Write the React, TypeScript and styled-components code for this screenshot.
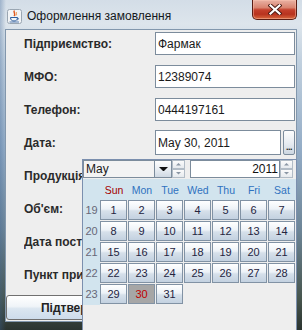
import React, { FC } from 'react'
import styled, { createGlobalStyle } from 'styled-components'

const GlobalStyle = createGlobalStyle`
    html, body { margin: 0; padding: 0; }
    body {
        width: 302px;
        height: 330px;
        overflow: hidden;
        background: #2e3832;
        font-family: "Liberation Sans", Arial, sans-serif;
    }
`

const Window = styled.div`
    position: relative;
    width: 302px;
    height: 330px;
    box-sizing: border-box;
    padding: 0 5px 8px 5px;
    display: flex;
    flex-direction: column;
    overflow: hidden;
    background:
        linear-gradient(90deg, rgba(60, 100, 150, 0.35) 0, rgba(60, 100, 150, 0) 6px),
        linear-gradient(180deg, #d3dde7 0, #dde5ec 24px, #c2d1df 60px, #93acc6 150px, #6d8597 230px, #46544c 300px, #2b3430 330px);
`

const TitleBar = styled.div`
    height: 29px;
    flex-shrink: 0;
    display: flex;
    align-items: flex-start;
`

const AppIcon = styled.svg`
    margin: 9px 5px 0 2px;
    flex-shrink: 0;
`

const Title = styled.div`
    margin-top: 9px;
    font-size: 12px;
    line-height: 14px;
    color: #141820;
    white-space: nowrap;
`

const CloseButton = styled.div`
    margin-left: auto;
    width: 45px;
    height: 20px;
    box-sizing: border-box;
    border: 1px solid #5a1d14;
    border-top: none;
    border-radius: 0 0 5px 5px;
    display: flex;
    justify-content: center;
    align-items: center;
    background: linear-gradient(180deg, #e9b2a4 0, #d98470 40%, #c4402c 52%, #b8331f 75%, #d8683e 100%);
    box-shadow: inset 0 0 0 1px rgba(255, 200, 180, 0.45);
`

const Content = styled.div`
    flex: 1;
    display: flex;
    flex-direction: column;
    background: #eeeeee;
    border: 1px solid #8297ad;
`

const FormGrid = styled.div`
    display: grid;
    grid-template-columns: 131px 1fr;
    grid-auto-rows: 23px;
    row-gap: 10px;
    padding: 2px 1px 0 18px;
`

// rows under the popup are cut where the popup begins
const Label = styled.div<{ $clipped?: boolean }>`
    display: flex;
    align-items: center;
    font-size: 12px;
    font-weight: 700;
    color: #2a2a2a;
    white-space: nowrap;
    ${p => p.$clipped && 'max-width: 58px; overflow: hidden;'}
`

const Field = styled.div<{ $grow?: boolean }>`
    box-sizing: border-box;
    height: 100%;
    ${p => p.$grow && 'flex: 1;'}
    display: flex;
    align-items: center;
    padding: 0 2px;
    background: #ffffff;
    border: 1px solid #7c8c9c;
    font-size: 12px;
    color: #1a1a1a;
    white-space: nowrap;
`

const DateRow = styled.div`
    display: flex;
    gap: 2px;
    margin: -1px 0;
`

const DotsButton = styled.div`
    width: 12px;
    box-sizing: border-box;
    border: 1px solid #7c8c9c;
    border-radius: 2px;
    background: linear-gradient(180deg, #fdfdfd 0, #e8edf2 50%, #cdd7e1 100%);
    display: flex;
    justify-content: center;
    align-items: flex-end;
    overflow: hidden;
    font-size: 9px;
    line-height: 14px;
    font-weight: 700;
    color: #222;
    letter-spacing: -0.5px;
`

const ButtonRow = styled.div`
    margin-top: 9px;
    display: grid;
    grid-template-columns: 1fr 1fr;
    height: 25px;
    padding-right: 1px;
`

const ActionButton = styled.div`
    box-sizing: border-box;
    border: 1px solid #707070;
    border-radius: 3px;
    background: linear-gradient(180deg, #ffffff 0, #f0f4f8 45%, #dbe6f0 55%, #cddceb 100%);
    display: flex;
    justify-content: center;
    align-items: center;
    font-size: 12px;
    font-weight: 700;
    color: #222;
`

/* calendar popup lies over the form */
const Popup = styled.div`
    position: absolute;
    left: 82px;
    top: 159px;
    width: 215px;
    bottom: -4px;
    box-sizing: border-box;
    border: 1px solid #7b8fae;
    background: #eeeeee;
`

const TopRow = styled.div`
    display: flex;
    height: 18px;
    margin-bottom: 1px;
`

const MonthBox = styled.div`
    width: 71px;
    box-sizing: border-box;
    border: 1px solid #7c8c9c;
    border-right: none;
    background: #f3f3f3;
    padding-left: 2px;
    display: flex;
    align-items: center;
    font-size: 12px;
    color: #1a1a1a;
`

const ArrowButton = styled.div`
    width: 18px;
    box-sizing: border-box;
    border: 1px solid #7c8c9c;
    background: linear-gradient(180deg, #fdfdfd 0, #e9eef3 50%, #d0d9e3 100%);
    display: flex;
    justify-content: center;
    align-items: center;
`

const Spin = styled.div`
    width: 13px;
    display: flex;
    flex-direction: column;
`

const SpinHalf = styled.div`
    flex: 1;
    box-sizing: border-box;
    border: 1px solid #b2bcc6;
    background: linear-gradient(180deg, #fbfbfb 0, #e6eaee 100%);
    display: flex;
    justify-content: center;
    align-items: center;
`

const YearBox = styled.div`
    width: 90px;
    margin-left: 5px;
    box-sizing: border-box;
    border: 1px solid #7c8c9c;
    background: #ffffff;
    padding-right: 1px;
    display: flex;
    align-items: center;
    justify-content: flex-end;
    font-size: 12px;
    color: #111;
`

const CalendarGrid = styled.div`
    display: grid;
    grid-template-columns: 17px repeat(7, 28px);
    grid-auto-rows: 21px;
`

const HeadCell = styled.div<{ $sunday?: boolean }>`
    background: #d2e4ee;
    display: flex;
    justify-content: center;
    align-items: center;
    font-size: 10.5px;
    color: ${p => (p.$sunday ? '#a40000' : '#2f72c0')};
`

const WeekCell = styled.div`
    background: #d2e4ee;
    display: flex;
    justify-content: center;
    align-items: center;
    padding-bottom: 1px;
    font-size: 11px;
    color: #686878;
`

const DayButton = styled.div<{ $selected?: boolean }>`
    width: 27px;
    height: 20px;
    box-sizing: border-box;
    border: 1px solid #8192a4;
    background: ${p => (p.$selected
        ? '#a6a6a6'
        : 'linear-gradient(180deg, #ffffff 0, #edf2f7 45%, #d6e0ea 55%, #c3d1e0 100%)')};
    display: flex;
    justify-content: center;
    align-items: center;
    font-size: 11px;
    color: ${p => (p.$selected ? '#c00000' : '#24243f')};
`

const Triangle: FC<{ size: number; up?: boolean; color: string }> = ({ size, up, color }) => (
    <svg width={size} height={size / 2} viewBox="0 0 8 4">
        <path d={up ? 'M0 4 L4 0 L8 4 Z' : 'M0 0 L8 0 L4 4 Z'} fill={color} />
    </svg>
)

const Spinner: FC = () => (
    <Spin>
        <SpinHalf><Triangle size={5} up color="#8a96a4" /></SpinHalf>
        <SpinHalf><Triangle size={5} color="#8a96a4" /></SpinHalf>
    </Spin>
)

const dayNames = ['Sun', 'Mon', 'Tue', 'Wed', 'Thu', 'Fri', 'Sat']
const weeks = [19, 20, 21, 22, 23]
const selectedDay = 30

const Calendar: FC = () => (
    <Popup>
        <TopRow>
            <MonthBox>May</MonthBox>
            <ArrowButton><Triangle size={9} color="#111" /></ArrowButton>
            <Spinner />
            <YearBox>2011</YearBox>
            <Spinner />
        </TopRow>
        <CalendarGrid>
            <HeadCell />
            {dayNames.map((d, i) => <HeadCell key={d} $sunday={i === 0}>{d}</HeadCell>)}
            {weeks.map((w, row) => (
                <React.Fragment key={w}>
                    <WeekCell>{w}</WeekCell>
                    {dayNames.map((_, col) => {
                        const day = row * 7 + col + 1
                        return (
                            <div key={col}>
                                {day <= 31 && <DayButton $selected={day === selectedDay}>{day}</DayButton>}
                            </div>
                        )
                    })}
                </React.Fragment>
            ))}
        </CalendarGrid>
    </Popup>
)

const JavaIcon: FC = () => (
    <AppIcon width="15" height="15" viewBox="0 0 15 15">
        <rect x="0.5" y="0.5" width="14" height="14" rx="2" fill="#f2f4f6" stroke="#9aa6b2" />
        <path d="M7.5 1.5 C5.5 3.5 9.5 4.5 7 7" stroke="#e0561c" strokeWidth="1.4" fill="none" />
        <path d="M9.5 3 C8.5 4.2 10.5 5 9 6.5" stroke="#f08a3a" strokeWidth="1" fill="none" />
        <path d="M3.5 8.5 H10.5 C10.5 11 9 12 7 12 C5 12 3.5 11 3.5 8.5 Z" fill="none" stroke="#2d5e9e" strokeWidth="1" />
        <path d="M10.5 9 C12 9 12 10.5 10 11" fill="none" stroke="#2d5e9e" strokeWidth="0.8" />
        <path d="M2.5 13 H12" stroke="#2d5e9e" strokeWidth="0.8" />
    </AppIcon>
)

const CloseIcon: FC = () => (
    <svg width="14" height="11" viewBox="0 0 14 11">
        <path d="M2.5 1.5 L11.5 9.5 M11.5 1.5 L2.5 9.5" stroke="#4a1a12" strokeWidth="4" strokeLinecap="square" />
        <path d="M2.5 1.5 L11.5 9.5 M11.5 1.5 L2.5 9.5" stroke="#ffffff" strokeWidth="2.2" strokeLinecap="square" />
    </svg>
)

const App: FC = () => (
    <>
        <GlobalStyle />
        <Window>
            <TitleBar>
                <JavaIcon />
                <Title>Оформлення замовлення</Title>
                <CloseButton><CloseIcon /></CloseButton>
            </TitleBar>
            <Content>
                <FormGrid>
                    <Label>Підприємство:</Label>
                    <Field>Фармак</Field>
                    <Label>МФО:</Label>
                    <Field>12389074</Field>
                    <Label>Телефон:</Label>
                    <Field>0444197161</Field>
                    <Label>Дата:</Label>
                    <DateRow>
                        <Field $grow>May 30, 2011</Field>
                        <DotsButton>...</DotsButton>
                    </DateRow>
                    <Label $clipped>Продукція:</Label>
                    <Field />
                    <Label $clipped>Об'єм:</Label>
                    <Field />
                    <Label $clipped>Дата поставки:</Label>
                    <Field />
                    <Label $clipped>Пункт призначення:</Label>
                    <Field />
                </FormGrid>
                <ButtonRow>
                    <ActionButton>Підтвердити</ActionButton>
                    <ActionButton>Скасувати</ActionButton>
                </ButtonRow>
            </Content>
            <Calendar />
        </Window>
    </>
)

export default App
